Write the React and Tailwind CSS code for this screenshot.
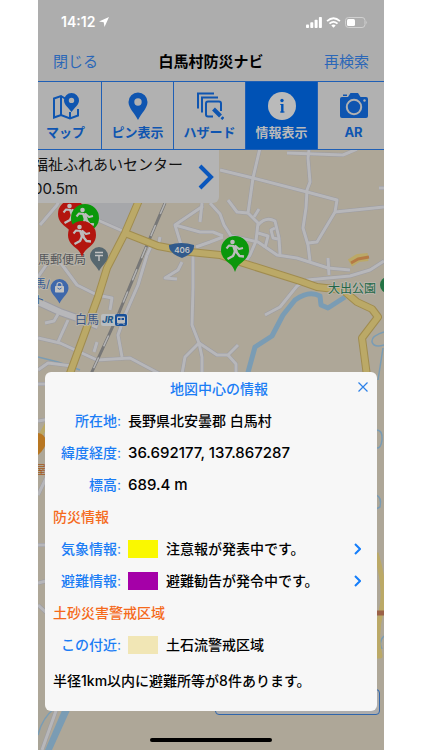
import React, { useState } from 'react';

// Local streets, drawn twice: casing first, then the lighter fill
const STREETS = [
  'M40 225 L57 205 L62 196',
  'M93 218 L125 232',
  'M203 206 L175 225 L182 248',
  'M175 225 L200 232 L213 232 L223 236',
  'M160 237 L158 247',
  'M196 247 L210 242 L223 237',
  'M202 203 L200 222',
  'M210 203 L220 214 L224 225 L231 236 L258 242 L277 255 L297 258 L328 268 L350 270',
  'M260 148 L253 178 L248 213 L258 223 L256 241 L250 255 L246 261',
  'M248 213 L237 212 L228 200',
  'M254 217 L259 209',
  'M258 225 Q266 216 275 221 L279 238 L280 254',
  'M258 233 L268 236 L265 248',
  'M275 228 L271 230 L273 238 L278 239',
  'M220 170 L253 178 L307 192 L337 200 L335 212 L317 242 L308 243',
  'M309 150 L308 158 L310 182 L307 190 L306 208 L303 228 L308 245 L310 261',
  'M335 212 L384 207',
  'M287 153 L343 155 L357 149',
  'M384 188 L379 188',
  'M328 258 L329 275',
  'M384 261 L370 270 L350 276 L307 280 L297 286 L280 307 L265 315',
  'M53 255 L38 277',
  'M57 258 L77 285 L97 295 L112 298 L110 310',
  'M147 255 L138 285 L125 315 L118 335 L122 357',
  'M147 255 L152 244',
  'M38 338 L60 343 L97 360 L130 358 L160 374',
  'M193 255 L193 288 L192 325 L199 343 L185 357 L182 374',
  'M199 343 L217 355 L228 355 L238 345',
  'M199 343 L202 357 L202 374',
  'M228 355 L236 364 L236 374',
  'M182 262 L178 270 L165 278 L177 279',
  'M97 342 L94 352',
  'M68 320 L58 342',
  'M45 323 L54 321 L58 314',
  'M38 370 L48 363 L72 366',
  'M38 384 L50 384',
  'M38 421 L50 419',
  'M50 470 L38 495',
  'M38 545 L50 545',
  'M38 583 L50 580',
  'M38 605 L50 616',
  'M57 708 L42 750',
];

const MAIN_ROADS = [
  'M140 198 L125 233 L107 268 L98 297 L69 376',
  'M125 233 L158 246 L190 252 L220 255 L243 263 L300 281 L317 287 L343 290 L357 302 L372 309 L378 317 L362 338 L367 376',
];

const STREAMS = [
  'M384 332 Q371 336 372 342 Q374 348 384 345',
  'M383 348 L378 380',
  'M376 430 Q383 430 382 440 Q381 449 376 448',
  'M376 495 Q382 497 380 507 L376 509',
  'M38 357 L58 362 L80 370',
  'M384 636 Q378 642 382 649',
  'M55 708 Q42 718 38 735',
];

const DETAILS = {
  location: '長野県北安曇郡 白馬村',
  coordinates: '36.692177, 137.867287',
  altitude: '689.4 m',
};

const MapTabIcon = () => (
  <svg viewBox="0 0 28 28" className="size-7" fill="none" stroke="currentColor" strokeWidth="2">
    <path d="M13 6.5 L9 4 L2 6.500 V25.500 L9 23 L18 26.500 L26 23.500 V17" />
    <path d="M9 4 V23 M18 20 V26" />
    <path d="M19.500 1 a7.500 7.500 0 0 1 7.500 7.500 c0 4.500 -4.500 7 -7.500 11.500 c-3 -4.500 -7.500 -7 -7.500 -11.500 a7.500 7.500 0 0 1 7.500 -7.500z M19.500 5.700 a2.700 2.700 0 1 0 0 5.400 a2.700 2.700 0 0 0 0 -5.400z" fill="currentColor" fillRule="evenodd" stroke="none" />
  </svg>
);

const PinTabIcon = () => (
  <svg viewBox="0 0 28 28" className="size-7" fill="currentColor">
    <path d="M14 0.500 a9.500 9.500 0 0 1 9.500 9.500 c0 6 -6 11 -9.500 18 c-3.500 -7 -9.500 -12 -9.500 -18 a9.500 9.500 0 0 1 9.500 -9.500z M14 6.300 a3.700 3.700 0 1 0 0 7.400 a3.700 3.700 0 0 0 0 -7.400z" fillRule="evenodd" />
  </svg>
);

const HazardTabIcon = () => (
  <svg viewBox="0 0 28 28" className="size-7" fill="none" stroke="currentColor" strokeWidth="2">
    <path d="M2 16.500 V1.500 H18" />
    <path d="M6 20.500 V5.500 H22" />
    <path d="M17 24.500 H12 Q10 24.500 10 22.500 V11.500 Q10 9.500 12 9.500 H23 Q25 9.500 25 11.500 V19" />
    <path d="M17.500 17 L24.500 24" strokeWidth="4" />
    <path d="M25.600 25.300 L27.300 27" strokeWidth="3" />
  </svg>
);

const InfoTabIcon = () => (
  <svg viewBox="0 0 28 28" className="size-7">
    <circle cx="14" cy="14" r="14" fill="currentColor" />
    <circle cx="14" cy="8.500" r="1.700" fill="#0052b5" />
    <path d="M12.300 12.500 H14.500 M12 20 H16.500" stroke="#0052b5" strokeWidth="1.200" />
    <path d="M14.300 12 V20.500" stroke="#0052b5" strokeWidth="2.400" />
  </svg>
);

const CameraTabIcon = () => (
  <svg viewBox="0 0 28 28" className="size-7">
    <path d="M3 2.500 h4 v1.500 h-4z" fill="currentColor" />
    <path d="M2 5 H8 L10.500 1 H18 L20.500 5 H26 Q28 5 28 7 V24 Q28 26 26 26 H2 Q0 26 0 24 V7 Q0 5 2 5z" fill="currentColor" />
    <circle cx="14" cy="15" r="7.200" fill="none" stroke="#b1b1b1" strokeWidth="2" />
    <circle cx="24.500" cy="8.500" r="1.200" fill="#b1b1b1" />
  </svg>
);

const TABS = [
  { id: 'map', label: 'マップ', Icon: MapTabIcon },
  { id: 'pins', label: 'ピン表示', Icon: PinTabIcon },
  { id: 'hazard', label: 'ハザード', Icon: HazardTabIcon },
  { id: 'info', label: '情報表示', Icon: InfoTabIcon },
  { id: 'ar', label: 'AR', Icon: CameraTabIcon },
];

const StatusBar = () => (
  <div className="flex h-11 items-center justify-between pl-[23px] pr-4 text-white">
    <div className="flex items-center gap-1 text-sm font-semibold">
      <span>14:12</span>
      <svg viewBox="0 0 10 10" className="size-[10px]" fill="currentColor">
        <path d="M10 0 L5.500 10 L4.700 5.300 L0 4.500z" />
      </svg>
    </div>
    <div className="flex items-center gap-1">
      <svg viewBox="0 0 16 11" className="h-[11px] w-4" fill="currentColor">
        <rect x="0" y="7.500" width="3" height="3.500" rx="0.800" />
        <rect x="4.300" y="5.200" width="3" height="5.800" rx="0.800" />
        <rect x="8.600" y="2.800" width="3" height="8.200" rx="0.800" />
        <rect x="12.900" y="0" width="3" height="11" rx="0.800" />
      </svg>
      <svg viewBox="0 0 16 12" className="h-[11px] w-[15px]" fill="none" stroke="currentColor" strokeWidth="2">
        <path d="M1 4.500 Q8 -1.900 15 4.500" />
        <path d="M3.600 7.300 Q8 3.300 12.400 7.300" />
        <path d="M5.600 9.300 Q8 7.300 10.400 9.300 L8 11.800z" fill="currentColor" stroke="none" />
      </svg>
      <svg viewBox="0 0 23 11" className="h-[11px] w-[23px]">
        <rect x="0.500" y="0.500" width="19.500" height="10" rx="3" fill="none" stroke="#d0d0d0" />
        <rect x="2" y="2" width="8" height="7" rx="1.500" fill="#fff" />
        <path d="M21.300 3.700 Q23 5.500 21.300 7.300z" fill="#d0d0d0" />
      </svg>
    </div>
  </div>
);

// Evacuation pin: coloured drop with a running figure
const ShelterPin = ({ x, y, color }) => (
  <g transform={`translate(${x} ${y})`}>
    <path d="M0 -14 a14 14 0 0 1 14 14 c0 7 -5 11 -9 14 c-2.500 2 -3.500 4 -5 8 c-1.500 -4 -2.500 -6 -5 -8 c-4 -3 -9 -7 -9 -14 a14 14 0 0 1 14 -14z" fill={color} />
    <circle cx="-2.500" cy="-8" r="2.300" fill="#bdbdbd" />
    <g fill="none" stroke="#bdbdbd" strokeLinejoin="round">
      <path d="M-1 -4.500 L1 2" strokeWidth="4" />
      <path d="M-1 -4 L-6 -4.500 L-8.500 -1.500" strokeWidth="2" />
      <path d="M0 -4.500 L4 -1 L8 -2" strokeWidth="2" />
      <path d="M0 1.500 L-2 6 L-7.500 9" strokeWidth="2.400" />
      <path d="M1 1.500 L4.500 6 L9 6.500" strokeWidth="2.400" />
    </g>
  </g>
);

const MapCanvas = () => (
  <svg
    viewBox="38 150 346 600"
    preserveAspectRatio="xMidYMin slice"
    className="absolute inset-0 h-full w-full"
    fill="none"
    strokeLinejoin="round"
  >
    <rect x="0" y="100" width="460" height="700" fill="#aea798" />
    <path d="M88 203 H138 L125 232 L92 218z" fill="#a6a7aa" />
    <path d="M38 700 H60 L45 750 H38z" fill="#a9a497" />

    <g stroke="#7a9cb4" strokeWidth="1.500">
      {STREAMS.map((d) => <path key={d} d={d} />)}
    </g>
    <path d="M345 297 L328 308 L321 305 L320 296 Q309 290 295 300 L283 315 L272 336 L255 347 L247 376" stroke="#7a9cb4" strokeWidth="5" />
    <path d="M63 708 H71 L52 750 H45z" fill="#7a9cb4" />

    <g stroke="#9c9ca2" strokeWidth="4">
      {STREETS.map((d) => <path key={d} d={d} />)}
      <path d="M36 301 L60 312 L80 319 L98 326" strokeWidth="8" />
    </g>
    <g stroke="#b7b7ba" strokeWidth="3">
      {STREETS.map((d) => <path key={d} d={d} />)}
      <path d="M36 301 L60 312 L80 319 L98 326" strokeWidth="6" />
    </g>

    <path d="M165 203 L147 245 L118 315 L91 374" stroke="#777" strokeWidth="3" />
    <path d="M165 203 L147 245 L118 315 L91 374" stroke="#b4b4b4" strokeWidth="1.500" strokeDasharray="12 12" />

    <g stroke="#a08c4f" strokeWidth="8">
      {MAIN_ROADS.map((d) => <path key={d} d={d} />)}
    </g>
    <g stroke="#bba967" strokeWidth="6">
      {MAIN_ROADS.map((d) => <path key={d} d={d} />)}
    </g>
    <path d="M350 263 L358 258 L368 257" stroke="#bba967" strokeWidth="8" />
    <path d="M351 263 L358 259 L369 257" stroke="#b57a45" strokeWidth="3" />

    {/* Slivers of road around the dialog */}
    <path d="M38 440 L50 418" stroke="#bba967" strokeWidth="4" />
    <path d="M376 553 Q387 590 381 612 T380 656 L374 656" stroke="#bba967" strokeWidth="5" />
    <path d="M374 613 H384" stroke="#9b6248" strokeWidth="5" />
    <path d="M38 433 a9 9 0 0 1 8 8 q0 7 -8 14z" fill="#b87722" />
    <text x="35" y="474" fontSize="11" fill="#a45a20">屋</text>

    {/* Route shield */}
    <path d="M169 245 Q181 241 194 245 Q195 253 182 258 Q168 253 169 245z" fill="#315a8c" />
    <text x="182" y="253" fontSize="8" fontWeight="600" fill="#c4c4c4" textAnchor="middle">406</text>

    <g fontSize="12" strokeWidth="2" paintOrder="stroke" stroke="#b8b4aa">
      <text x="38" y="264" fill="#56585a">馬郵便局</text>
      <text x="35" y="288" fontSize="11" fill="#365b93">馬/</text>
      <text x="34" y="304" fontSize="11" fill="#365b93">ト</text>
      <text x="75" y="324" fill="#3b5685">白馬</text>
      <text x="328" y="293" fill="#226747">大出公園</text>
    </g>
    <circle cx="388" cy="285" r="8" fill="#247344" />

    <rect x="101" y="314" width="27" height="12" rx="2" fill="#b9bdbf" />
    <text x="102" y="323" fontSize="9" fontWeight="800" fontStyle="italic" fill="#22598a">JR</text>
    <rect x="115" y="314" width="12" height="12" rx="2" fill="#174f98" />
    <path d="M118 316.500 h6 q1 0 1 1 v5 q0 1 -1 1 h-6 q-1 0 -1 -1 v-5 q0 -1 1 -1z" fill="#bdbdbd" />
    <path d="M118 318 h2.500 v2 h-2.500z M121.500 318 h2.500 v2 h-2.500z" fill="#174f98" />
    <path d="M119 323.500 l-1.500 1.500 M123 323.500 l1.500 1.500" stroke="#bdbdbd" />

    {/* Post office */}
    <path d="M99 247 a9 9 0 0 1 9 9 c0 6 -6 9 -9 15 c-3 -6 -9 -9 -9 -15 a9 9 0 0 1 9 -9z" fill="#56676f" />
    <path d="M95 252.500 h8 M95 255.500 h8 M99 255.500 v5.500" stroke="#c2c2c2" strokeWidth="1.500" />

    {/* Shop */}
    <path d="M59.500 279 a9 9 0 0 1 9 9 c0 6 -6 9 -9 15.500 c-3 -6.500 -9 -9.500 -9 -15.500 a9 9 0 0 1 9 -9z" fill="#3f68ab" />
    <rect x="55" y="286" width="9" height="6.500" rx="0.800" fill="#c2c2c2" />
    <path d="M57 286 v-1 a2.500 2.500 0 0 1 5 0 v1" stroke="#c2c2c2" strokeWidth="1.200" />
    <path d="M57.500 288 q2 2.500 4 0" stroke="#3f68ab" />

    <ShelterPin x={72} y={214} color="#b3150f" />
    <ShelterPin x={85} y={218} color="#0b970b" />
    <ShelterPin x={82} y={235} color="#b3150f" />
    <ShelterPin x={235} y={250} color="#0b970b" />
  </svg>
);

const Chevron = () => (
  <svg viewBox="0 0 7 12" className="h-3 w-[7px]" fill="none" stroke="#147efb" strokeWidth="2">
    <path d="M1 1 L6 6 L1 11" />
  </svg>
);

const Row = ({ label, swatch, children, onOpen, numeric }) => (
  <div className="flex h-8 items-center pr-4">
    <dt className="w-[76px] shrink-0 text-right text-[#1b7df5]">{label}<span className="font-normal">:</span></dt>
    <dd className={`flex flex-1 items-center gap-2 pl-[7px] whitespace-nowrap ${numeric ? 'text-[15px]' : ''}`}>
      {swatch && <span className={`h-[18px] w-[30px] ${swatch}`} />}
      <span>{children}</span>
    </dd>
    {onOpen && (
      <button type="button" aria-label={`${label}の詳細`} onClick={onOpen}>
        <Chevron />
      </button>
    )}
  </div>
);

const SectionHeading = ({ children }) => (
  <h3 className="flex h-8 items-center px-2 text-[#f56a1c]">{children}</h3>
);

const CenterInfoDialog = ({ onClose, onOpen }) => (
  <section
    role="dialog"
    aria-labelledby="center-info-title"
    className="absolute right-[7px] bottom-[39px] left-[7px] rounded-md bg-[#f7f7f7] pt-px pb-4 text-sm font-medium text-black"
  >
    <div className="relative flex h-8 items-center justify-center pl-4">
      <h2 id="center-info-title" className="text-[#1b7df5]">地図中心の情報</h2>
      <button type="button" aria-label="閉じる" onClick={onClose} className="absolute top-2 right-2">
        <svg viewBox="0 0 12 12" className="size-3" stroke="#2c80e8" strokeWidth="1.200">
          <path d="M1.500 1.500 L10.500 10.500 M10.500 1.500 L1.500 10.500" />
        </svg>
      </button>
    </div>
    <dl>
      <Row label="所在地">{DETAILS.location}</Row>
      <Row label="緯度経度" numeric>{DETAILS.coordinates}</Row>
      <Row label="標高" numeric>{DETAILS.altitude}</Row>
    </dl>
    <SectionHeading>防災情報</SectionHeading>
    <dl>
      <Row label="気象情報" swatch="bg-[#faf800]" onOpen={onOpen}>注意報が発表中です。</Row>
      <Row label="避難情報" swatch="bg-[#a500a8]" onOpen={onOpen}>避難勧告が発令中です。</Row>
    </dl>
    <SectionHeading>土砂災害警戒区域</SectionHeading>
    <dl>
      <Row label="この付近" swatch="bg-[#f1e6b5]">土石流警戒区域</Row>
    </dl>
    <p className="mt-1.5 flex h-7 items-center px-2">半径1km以内に避難所等が8件あります。</p>
  </section>
);

const App = () => {
  const [activeTab, setActiveTab] = useState('info');
  const [isDialogOpen, setIsDialogOpen] = useState(true);

  const selectTab = (id) => {
    setActiveTab(id);
    setIsDialogOpen(id === 'info');
  };

  return (
    <div className="bg-white px-[38px] font-['Inter','Noto_Sans_CJK_JP',sans-serif]">
      <main className="flex min-h-screen flex-col overflow-hidden bg-[#adadad]">
        <header>
          <StatusBar />
          <div className="grid h-[37px] grid-cols-[1fr_auto_1fr] items-center px-[15px] text-[15px]">
            <button type="button" className="justify-self-start text-[#2b67b8]">閉じる</button>
            <h1 className="font-bold text-black">白馬村防災ナビ</h1>
            <button type="button" className="justify-self-end text-[#2b67b8]">再検索</button>
          </div>
        </header>

        {/* Tabs run past both screen edges */}
        <nav className="-mr-[6px] -ml-2 grid grid-cols-5 border-y border-[#1f5fb5]">
          {TABS.map(({ id, label, Icon }) => (
            <button
              key={id}
              type="button"
              onClick={() => selectTab(id)}
              className={`flex flex-col items-center gap-[2px] border-r border-[#1f5fb5] pt-[10px] pb-[7px] text-[13px] leading-5 font-bold ${
                activeTab === id ? 'bg-[#0052b5] text-[#bababa]' : 'bg-[#b1b1b1] text-[#0f55b0]'
              }`}
            >
              <Icon />
              <span>{label}</span>
            </button>
          ))}
        </nav>

        <div className="relative min-h-[600px] flex-1 overflow-hidden">
          <MapCanvas />

          <button
            type="button"
            className="relative flex h-[53px] w-[181px] items-center justify-between rounded-br-md bg-[#b4b4b4] pr-[5px] text-left text-[15px] text-[#111]"
          >
            <span className="-ml-[5px] whitespace-nowrap">
              <span className="block leading-6">福祉ふれあいセンター</span>
              <span className="block leading-6">00.5m</span>
            </span>
            <svg viewBox="0 0 16 26" className="h-[26px] w-4 shrink-0" fill="none" stroke="#0a57bd" strokeWidth="4">
              <path d="M2 2 L13 13 L2 24" />
            </svg>
          </button>

          <div className="absolute right-1 bottom-[35px] h-[26px] w-[165px] rounded-sm border border-[#2f65ab] bg-[#adadad]" />

          {isDialogOpen && (
            <CenterInfoDialog onClose={() => setIsDialogOpen(false)} onOpen={() => setActiveTab('info')} />
          )}

          <div className="absolute bottom-2 left-1/2 h-1 w-[122px] -translate-x-1/2 rounded-full bg-black" />
        </div>
      </main>
    </div>
  );
};

export default App;
